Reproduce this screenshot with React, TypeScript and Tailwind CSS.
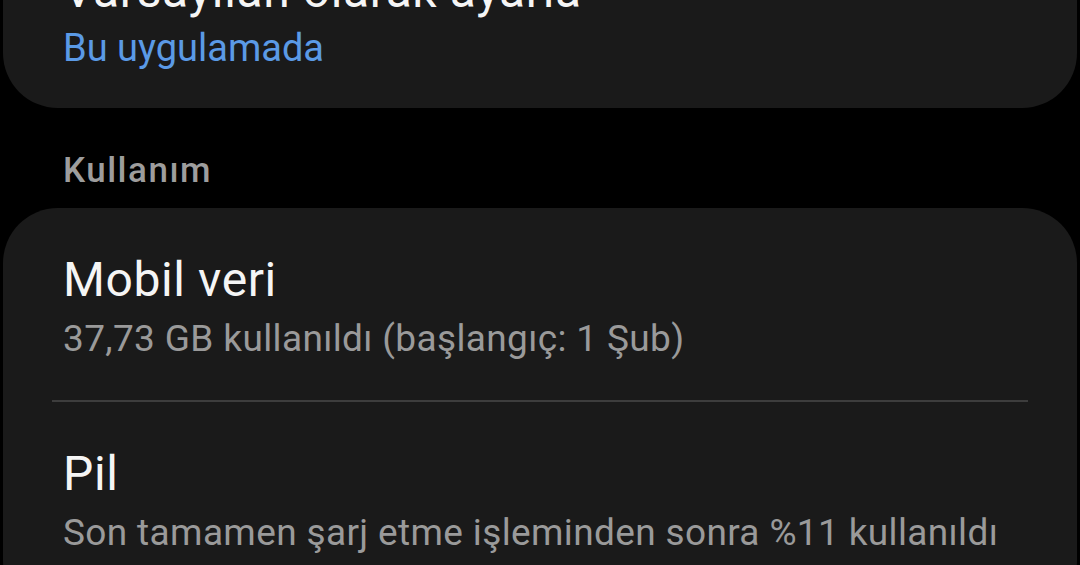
export default function App() {
	return (
		<div
			className="w-[1080px] h-[565px] overflow-hidden bg-black"
			style={{ fontFamily: 'Roboto, "Noto Sans", sans-serif' }}
		>
			{/* Default app card, scrolled partly out of view */}
			<div className="mx-[3px] mt-[-67px] rounded-[55px] bg-[#1a1a1a] pt-[30px] pb-[38px] pl-[60px] pr-[60px]">
				<div className="text-[48px] leading-[56px] tracking-[0.6px] text-[#f5f5f5] whitespace-nowrap">
					Varsayılan olarak ayarla
				</div>
				<div className="mt-[7px] text-[38px] leading-[44px] text-[#5b9ae6] whitespace-nowrap">
					Bu uygulamada
				</div>
			</div>

			{/* Section header */}
			<div className="mt-[43px] pl-[63px] text-[35px] leading-[40px] tracking-[1.5px] font-medium text-[#9d9d9d]">
				Kullanım
			</div>

			{/* Usage card */}
			<div className="mx-[3px] mt-[17px] rounded-[55px] bg-[#1a1a1a] pt-[44px] pb-[60px]">
				<div className="px-[60px]">
					<div className="text-[48px] leading-[56px] tracking-[0.6px] text-[#f5f5f5] whitespace-nowrap">
						Mobil veri
					</div>
					<div className="mt-[9px] text-[37px] leading-[44px] tracking-[0.36px] text-[#9a9a9a] whitespace-nowrap">
						37,73 GB kullanıldı (başlangıç: 1 Şub)
					</div>
				</div>
				<div className="mx-[49px] mt-[39px] h-[2px] bg-[#3d3d3d]" />
				<div className="px-[60px] mt-[44px]">
					<div className="text-[48px] leading-[56px] tracking-[0.6px] text-[#f5f5f5] whitespace-nowrap">Pil</div>
					<div className="mt-[9px] text-[37px] leading-[44px] tracking-[0.36px] text-[#9a9a9a] whitespace-nowrap">
						Son tamamen şarj etme işleminden sonra %11 kullanıldı
					</div>
				</div>
			</div>
		</div>
	);
}
